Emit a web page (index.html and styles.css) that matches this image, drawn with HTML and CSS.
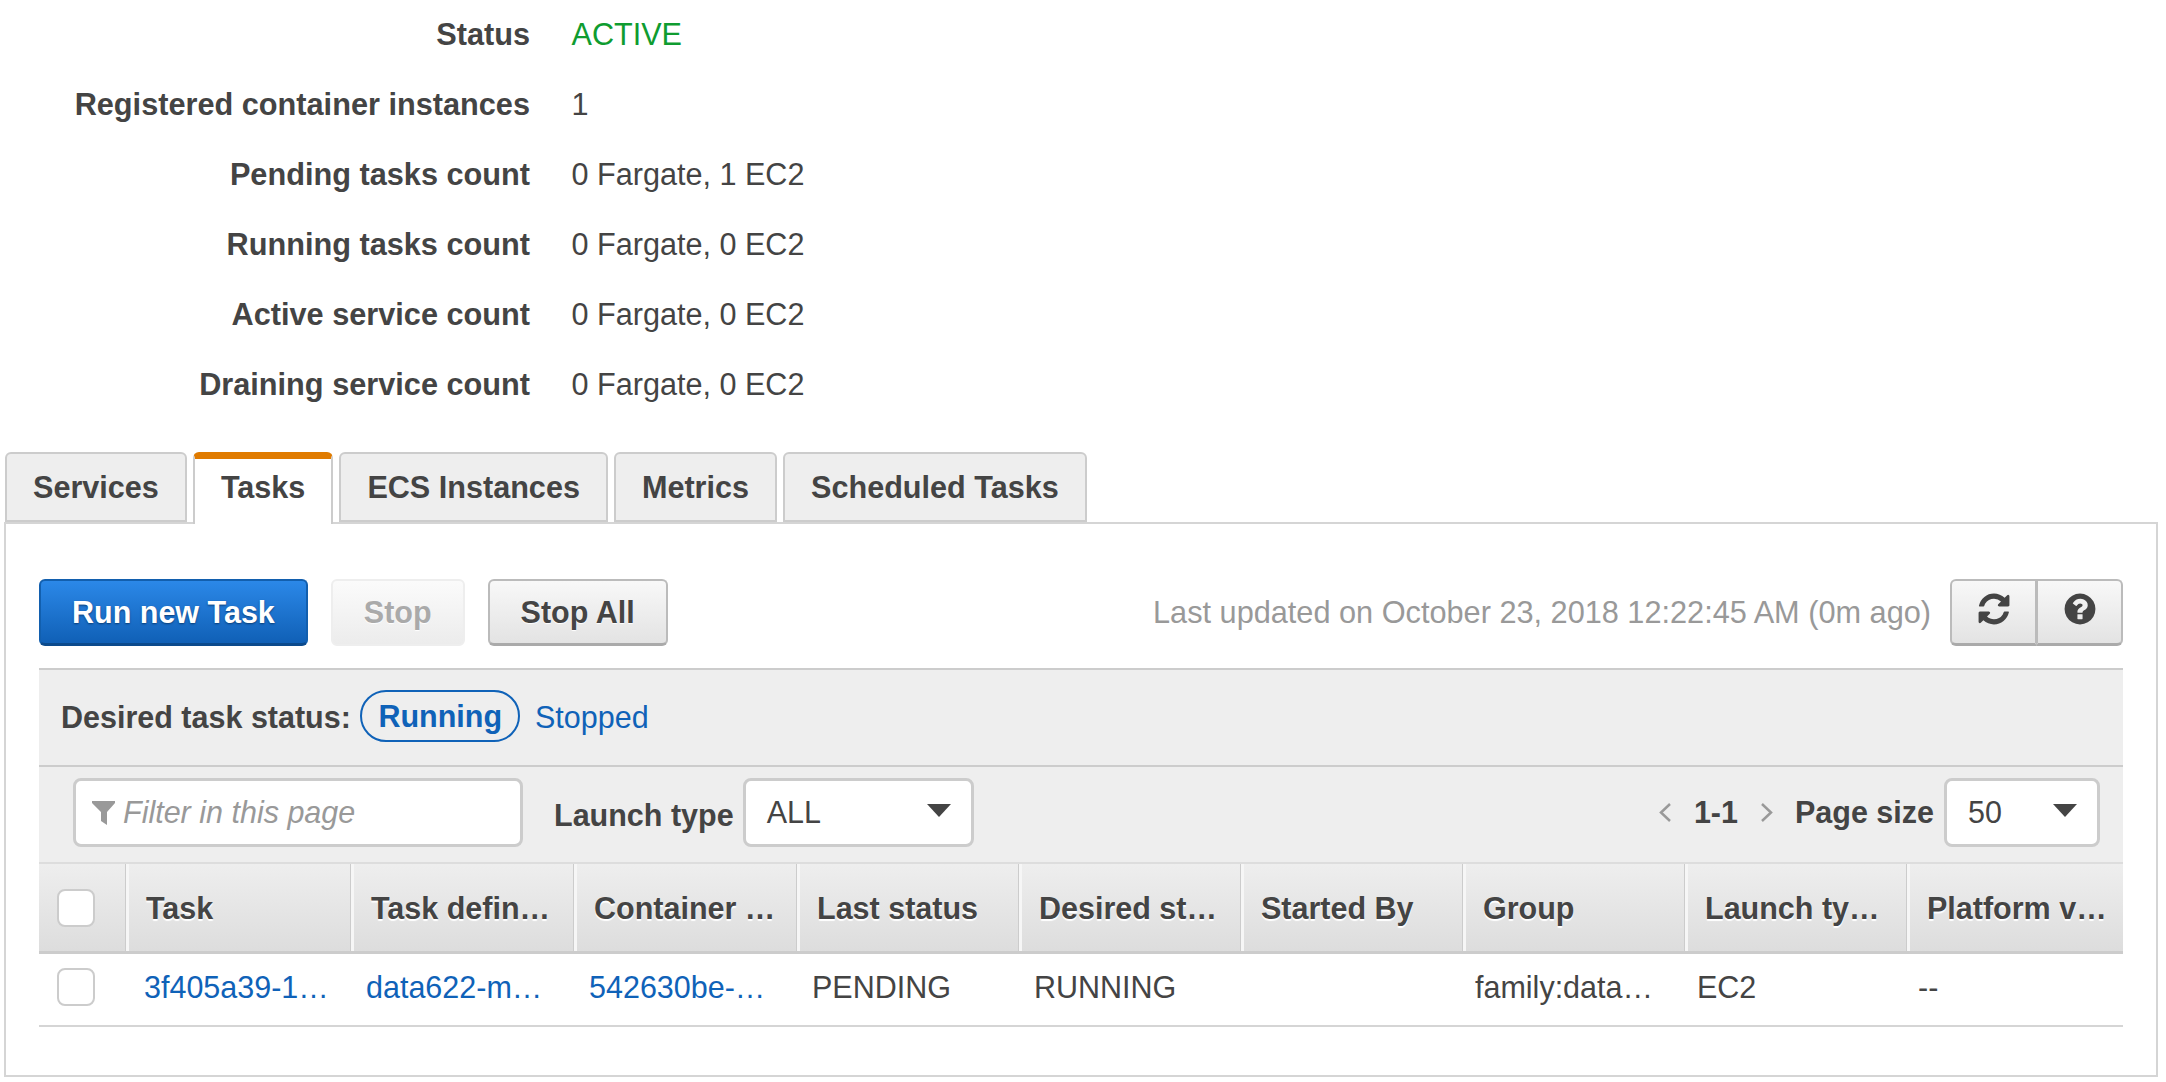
FILE: index.html
```html
<!DOCTYPE html>
<html lang="en">
<head>
<meta charset="utf-8">
<title>Cluster tasks</title>
<link rel="stylesheet" href="styles.css">
</head>
<body>
<main class="page">
  <section class="summary">
    <div class="kv"><span class="k">Status</span><span class="v active">ACTIVE</span></div>
    <div class="kv"><span class="k">Registered container instances</span><span class="v">1</span></div>
    <div class="kv"><span class="k">Pending tasks count</span><span class="v">0 Fargate, 1 EC2</span></div>
    <div class="kv"><span class="k">Running tasks count</span><span class="v">0 Fargate, 0 EC2</span></div>
    <div class="kv"><span class="k">Active service count</span><span class="v">0 Fargate, 0 EC2</span></div>
    <div class="kv"><span class="k">Draining service count</span><span class="v">0 Fargate, 0 EC2</span></div>
  </section>

  <nav class="tabs">
    <div class="tab">Services</div>
    <div class="tab tab-on">Tasks</div>
    <div class="tab">ECS Instances</div>
    <div class="tab">Metrics</div>
    <div class="tab">Scheduled Tasks</div>
  </nav>

  <section class="panel">
    <div class="actions">
      <button class="btn btn-primary">Run new Task</button>
      <button class="btn btn-off">Stop</button>
      <button class="btn">Stop All</button>
      <span class="updated">Last updated on October 23, 2018 12:22:45 AM (0m ago)</span>
      <div class="btn-group">
        <button class="icon-btn" aria-label="Refresh">
          <svg class="ico" viewBox="0 0 1792 1792"><path d="M1639 1056q0 5-1 7-64 268-268 434.5t-478 166.5q-146 0-282.5-55t-243.5-157l-129 129q-19 19-45 19t-45-19-19-45v-448q0-26 19-45t45-19h448q26 0 45 19t19 45-19 45l-137 137q71 66 161 102t187 36q134 0 250-65t186-179q11-17 53-117 8-23 30-23h192q13 0 22.5 9.5t9.5 22.5zm25-800v448q0 26-19 45t-45 19h-448q-26 0-45-19t-19-45 19-45l138-138q-148-137-349-137-134 0-250 65t-186 179q-11 17-53 117-8 23-30 23h-199q-13 0-22.5-9.5t-9.5-22.5v-7q65-268 270-434.5t480-166.5q146 0 284 55.5t245 156.5l130-129q19-19 45-19t45 19 19 45z"/></svg>
        </button>
        <button class="icon-btn" aria-label="Help">
          <svg class="ico" viewBox="0 0 1792 1792"><path d="M1024 1376v-192q0-14-9-23t-23-9h-192q-14 0-23 9t-9 23v192q0 14 9 23t23 9h192q14 0 23-9t9-23zm256-672q0-88-55.5-163t-138.5-116-170-41q-243 0-371 213-15 24 8 42l132 100q7 6 19 6 16 0 25-12 53-68 86-92 34-24 86-24 48 0 85.5 26t37.5 59q0 38-20 61t-68 45q-63 28-115.5 86.5t-52.5 125.5v36q0 14 9 23t23 9h192q14 0 23-9t9-23q0-19 21.5-49.5t54.5-49.5q32-18 49-28.5t46-35 44.5-48 28-60.5 12.5-81zm384 192q0 209-103 385.5t-279.5 279.5-385.5 103-385.5-103-279.5-279.5-103-385.5 103-385.5 279.5-279.5 385.5-103 385.5 103 279.5 279.5 103 385.5z"/></svg>
        </button>
      </div>
    </div>

    <div class="status-row">
      <span class="status-label">Desired task status:</span>
      <span class="pill">Running</span>
      <span class="link">Stopped</span>
    </div>

    <div class="toolbar">
      <div class="filter">
        <svg class="funnel" viewBox="0 0 23 24"><path d="M0 0H23V2L15 11V24L9 20V11L0 2Z"/></svg>
        <span>Filter in this page</span>
      </div>
      <span class="tool-label">Launch type</span>
      <div class="select select-type"><span>ALL</span><i class="caret"></i></div>
      <svg class="chev chev-prev" viewBox="0 0 12 19"><path d="M11 1L2 9.5L11 18"/></svg>
      <span class="range">1-1</span>
      <svg class="chev chev-next" viewBox="0 0 12 19"><path d="M1 1L10 9.5L1 18"/></svg>
      <span class="size-label">Page size</span>
      <div class="select select-size"><span>50</span><i class="caret"></i></div>
    </div>

    <div class="thead">
      <div class="th th-check"><span class="check"></span></div>
      <div class="th">Task</div>
      <div class="th">Task defin…</div>
      <div class="th">Container …</div>
      <div class="th">Last status</div>
      <div class="th">Desired st…</div>
      <div class="th">Started By</div>
      <div class="th">Group</div>
      <div class="th">Launch ty…</div>
      <div class="th">Platform v…</div>
    </div>
    <div class="tbody">
      <div class="td td-check"><span class="check"></span></div>
      <div class="td link">3f405a39-1…</div>
      <div class="td link">data622-m…</div>
      <div class="td link">542630be-…</div>
      <div class="td">PENDING</div>
      <div class="td">RUNNING</div>
      <div class="td"></div>
      <div class="td">family:data…</div>
      <div class="td">EC2</div>
      <div class="td">--</div>
    </div>
  </section>
</main>
</body>
</html>
```
FILE: styles.css
```css
* { box-sizing: border-box; }
html, body { margin: 0; padding: 0; background: #fff; }
body {
  font-family: "Liberation Sans", Arial, sans-serif;
  font-size: 30.5px;
  color: #444;
}
.page { padding: 0 8px 0 4px; }

.summary { margin-bottom: 36px; }
.kv { display: flex; align-items: center; height: 66px; margin-bottom: 4px; padding-top: 2px; }
.kv:last-child { margin-bottom: 0; }
.k { width: 526px; padding-top: 1px; text-align: right; font-weight: 700; font-size: 30.7px; }
.v { margin-left: 41.5px; font-size: 30.6px; }
.active { color: #0f9c30; }

.tabs { display: flex; gap: 6px; padding-left: 1px; height: 70px; }
.tab {
  height: 70px;
  padding: 0 26px;
  display: flex;
  align-items: center;
  font-size: 30.6px;
  font-weight: 700;
  background: #eee;
  border: 2px solid #ccc;
  border-radius: 6px 6px 0 0;
}
.tab-on {
  position: relative;
  z-index: 1;
  height: 72px;
  background: #fff;
  border-top: 7px solid #e07b00;
  border-bottom: 0;
  padding-bottom: 9px;
}

.panel {
  border: 2px solid #d5d5d5;
  padding: 55px 33px 48px;
  height: 555px;
}

.actions { display: flex; align-items: center; height: 67px; margin-bottom: 22px; }
.btn {
  height: 67px;
  padding: 0 31px;
  margin-right: 23px;
  font: 700 30.5px "Liberation Sans", Arial, sans-serif;
  color: #444;
  text-shadow: 0 1px 1px #fff;
  background: linear-gradient(#f8f8f8, #e3e3e3);
  border: 2px solid #bbb;
  border-bottom: 3px solid #aaa;
  border-radius: 6px;
}
.btn-primary {
  color: #fff;
  text-shadow: 0 1px 2px #0a3d75;
  background: linear-gradient(#2b88e8, #1060b6);
  border-color: #125fae #125fae #0b4a8c;
}
.btn-off {
  color: #aaa;
  background: linear-gradient(#fbfbfb, #ececec);
  border: 2px solid #eee;
}
.updated { margin-left: auto; margin-right: 19px; color: #999; font-size: 30.7px; }
.btn-group { display: flex; }
.icon-btn {
  width: 87px;
  height: 67px;
  padding: 0 0 6px;
  display: flex;
  align-items: center;
  justify-content: center;
  background: linear-gradient(#f8f8f8, #e3e3e3);
  border: 2px solid #bbb;
  border-bottom: 3px solid #aaa;
  border-radius: 6px 0 0 6px;
}
.icon-btn + .icon-btn { margin-left: -1px; border-radius: 0 6px 6px 0; }
.ico { width: 36px; height: 36px; fill: #444; }

.status-row {
  display: flex;
  align-items: center;
  height: 99px;
  padding-left: 22px;
  background: #eee;
  border-top: 2px solid #ccc;
  border-bottom: 2px solid #ccc;
}
.status-label { font-weight: 700; margin-right: 9.5px; }
.pill {
  height: 52px;
  padding: 0 16px;
  display: flex;
  align-items: center;
  font-weight: 700;
  color: #0f62b8;
  border: 2px solid #0f62b8;
  border-radius: 26px;
  margin: 0 15px 3px 0;
}
.link { color: #0f62b8; }

.toolbar {
  display: flex;
  align-items: center;
  height: 95px;
  padding: 0 23px 4px 34px;
  background: #eee;
}
.filter {
  display: flex;
  align-items: center;
  width: 450px;
  height: 69px;
  padding-left: 16px;
  background: #fff;
  border: 3px solid #ccc;
  border-radius: 8px;
  color: #999;
  font-style: italic;
}
.funnel { width: 23px; height: 24px; fill: #999; margin-right: 8px; }
.tool-label { font-weight: 700; margin: 6px 9px 0 31px; }
.select {
  display: flex;
  align-items: center;
  justify-content: space-between;
  height: 69px;
  padding: 0 20px;
  background: #fff;
  border: 3px solid #ccc;
  border-radius: 8px;
}
.select-type { width: 231px; padding-left: 21px; }
.select-size { width: 156px; padding-left: 21px; }
.caret {
  width: 0;
  height: 0;
  margin-top: -4px;
  border-left: 12px solid transparent;
  border-right: 12px solid transparent;
  border-top: 13px solid #444;
}
.chev { width: 12px; height: 19px; fill: none; stroke: #999; stroke-width: 2.5; }
.chev-prev { margin-left: auto; margin-right: 23px; }
.range { font-weight: 700; }
.chev-next { margin-left: 23px; margin-right: 22px; }
.size-label { font-weight: 700; margin-right: 10px; }

.thead {
  display: grid;
  grid-template-columns: 87px 225px 223px 223px 222px 222px 222px 222px 222px 216px;
  height: 92px;
  background: linear-gradient(#eee, #ddd);
  border-top: 2px solid #ddd;
  border-bottom: 3px solid #ccc;
}
.th {
  display: flex;
  align-items: center;
  padding: 2px 0 0 17px;
  font-weight: 700;
  text-shadow: 0 2px 1px #fff;
  white-space: nowrap;
  border-left: 3px solid #f6f6f6;
  box-shadow: -1px 0 0 #ccc;
}
.th-check { border-left: 0; box-shadow: none; padding: 0 0 0 18px; }

.tbody {
  display: grid;
  grid-template-columns: 91px 222px 223px 223px 222px 221px 220px 222px 221px 219px;
  height: 73px;
  border-bottom: 2px solid #d5d5d5;
}
.td {
  display: flex;
  align-items: center;
  padding: 0 0 5px 14px;
  white-space: nowrap;
}
.td-check { padding: 0 0 5px 18px; }
.check {
  display: block;
  width: 38px;
  height: 38px;
  background: #fff;
  border: 2px solid #ccc;
  border-radius: 8px;
}
```
